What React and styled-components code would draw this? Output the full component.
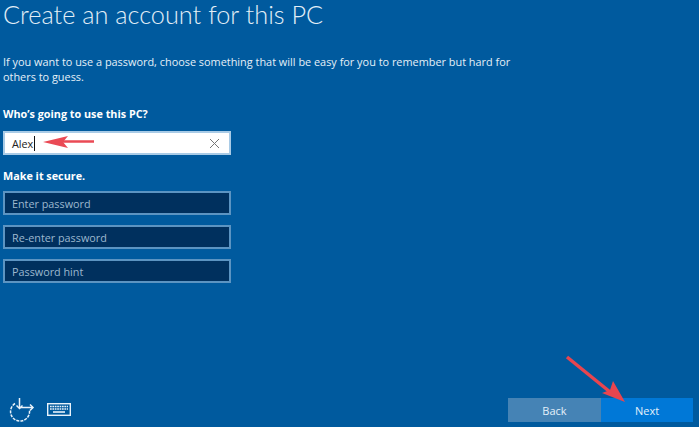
import React from 'react';
import styled, { createGlobalStyle } from 'styled-components';

const GlobalStyle = createGlobalStyle`
  html, body {
    margin: 0;
    padding: 0;
    background: #005a9e;
  }
`

const Page = styled.div`
  position: relative;
  width: 699px;
  height: 427px;
  overflow: hidden;
  display: flex;
  flex-direction: column;
  padding: 0 6px 5px 3px;
  box-sizing: border-box;
  background: #005a9e;
  color: #fff;
  font-family: "Open Sans", "Noto Sans", "Liberation Sans", sans-serif;
`

const Content = styled.main`
  flex: 1;
  display: flex;
  flex-direction: column;
  align-items: flex-start;
`

const Title = styled.h1`
  margin: 0;
  font-family: Lato, "Open Sans", sans-serif;
  font-size: 25.3px;
  line-height: 28px;
  font-weight: 300;
  color: #e2eef7;
`

const Description = styled.p`
  margin: 26px 0 0;
  width: 530px;
  font-size: 10.9px;
  line-height: 15px;
  color: #e6f0f8;
`

const Label = styled.h2`
  margin: ${props => props.$top}px 0 0;
  font-size: 10.8px;
  line-height: 16px;
  font-weight: 700;
  color: #fff;
`

const Fields = styled.div`
  margin-top: ${props => props.$top}px;
  display: flex;
  flex-direction: column;
  gap: 10px;
`

const Field = styled.div`
  width: 228px;
  height: 24px;
  box-sizing: border-box;
  display: flex;
  align-items: center;
  padding: 0 9px 0 7px;
  border: 2px solid ${props => (props.$active ? '#a9cbe6' : '#5c94c2')};
  background: ${props => (props.$active ? '#fff' : '#00305e')};
  color: ${props => (props.$active ? '#222' : '#9db8cf')};
  font-size: 10.8px;
`

const Caret = styled.span`
  width: 1px;
  height: 15px;
  margin-left: 1px;
  background: #111;
`

const ClearIcon = styled.svg`
  margin-left: auto;
  display: block;
`

const Footer = styled.footer`
  display: flex;
  align-items: flex-end;
  justify-content: space-between;
`

const Tools = styled.div`
  display: flex;
  align-items: center;
  gap: 12px;
  margin-left: 5px;
`

const Buttons = styled.div`
  display: flex;
`

const Button = styled.div`
  width: ${props => (props.$primary ? 92 : 93)}px;
  height: 24px;
  display: flex;
  align-items: center;
  justify-content: center;
  font-size: 11px;
  font-weight: 500;
  color: #e4f0fa;
  background: ${props => (props.$primary ? '#0078d7' : '#4583b5')};
`

const Annotation = styled.svg`
  position: absolute;
  left: 0;
  top: 0;
  pointer-events: none;
`

const EaseOfAccessIcon = () => (
  <svg width="27" height="25" viewBox="0 0 27 25" fill="none" stroke="#e8f2fa" strokeWidth="1.5">
    <path d="M7 6.5a9.5 9.5 0 1 0 14.5 7" strokeDasharray="3 1.1" />
    <path d="M11.5 1v10" />
    <path d="M8.5 8.5l3 3 3-3" />
    <path d="M12 10.5h13" />
    <path d="M22 7.5l3 3-3 3" />
  </svg>
)

const KeyboardIcon = () => (
  <svg width="24" height="13" viewBox="0 0 24 13" fill="none">
    <rect x="0.7" y="0.7" width="22.6" height="11.6" stroke="#e8f2fa" strokeWidth="1.4" />
    <path d="M3 3.5h18M3 6h18" stroke="#e8f2fa" strokeWidth="1.6" strokeDasharray="1.7 0.7" />
    <path d="M6 9h12" stroke="#e8f2fa" strokeWidth="1.6" />
  </svg>
)

const App = () => (
  <Page>
    <GlobalStyle />
    <Content>
      <Title>Create an account for this PC</Title>
      <Description>
        If you want to use a password, choose something that will be easy for you to remember but hard for
        others to guess.
      </Description>
      <Label $top={22}>Who’s going to use this PC?</Label>
      <Fields $top={9}>
        <Field $active>
          Alex<Caret />
          <ClearIcon width="11" height="11" viewBox="0 0 11 11" stroke="#777" strokeWidth="1" fill="none">
            <path d="M1 1l9 9M10 1l-9 9" />
          </ClearIcon>
        </Field>
      </Fields>
      <Label $top={13}>Make it secure.</Label>
      <Fields $top={7}>
        <Field>Enter password</Field>
        <Field>Re-enter password</Field>
        <Field>Password hint</Field>
      </Fields>
    </Content>
    <Footer>
      <Tools>
        <EaseOfAccessIcon />
        <KeyboardIcon />
      </Tools>
      <Buttons>
        <Button>Back</Button>
        <Button $primary>Next</Button>
      </Buttons>
    </Footer>
    <Annotation width="699" height="427" viewBox="0 0 699 427">
      <path d="M94 141.5H62" stroke="#ea4a55" strokeWidth="2.5" />
      <path d="M43 142l25-6-5 6 5 6z" fill="#ea4a55" />
      <path d="M567 357l48 39" stroke="#e8454f" strokeWidth="3.5" />
      <path d="M625 402l-23-9 8-3 3-9z" fill="#e8454f" />
    </Annotation>
  </Page>
);

export default App;
